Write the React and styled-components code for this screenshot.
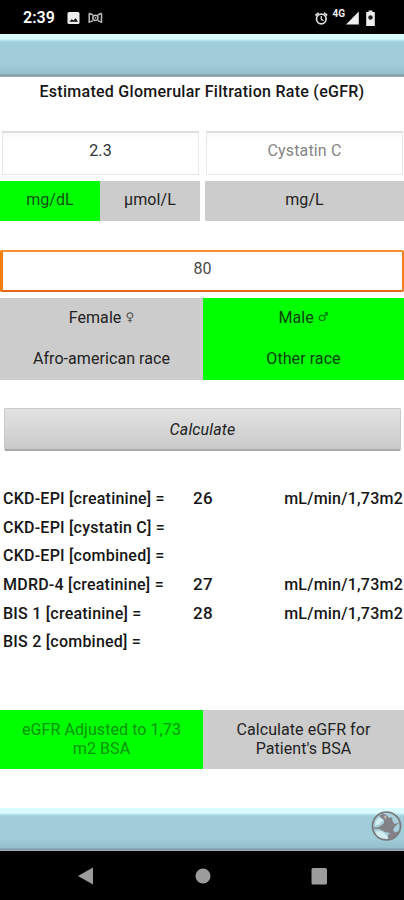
import React from 'react';
import styled, { createGlobalStyle } from 'styled-components';

const GlobalStyle = createGlobalStyle`
  * {
    box-sizing: border-box;
  }

  body {
    margin: 0;
    background: #fff;
    font-family: Roboto, sans-serif;
  }
`;

const Screen = styled.div`
  width: 404px;
  height: 900px;
  display: flex;
  flex-direction: column;
  overflow: hidden;
  background: #fff;
  color: #161616;
  font-size: 16px;
`;

const StatusBar = styled.header`
  height: 34px;
  flex-shrink: 0;
  display: flex;
  align-items: center;
  justify-content: space-between;
  padding: 1px 28px 0 23px;
  background: #000;
  color: #fff;
`;

const StatusGroup = styled.div`
  display: flex;
  align-items: center;
`;

const Clock = styled.span`
  width: 44px;
  font-size: 16px;
  font-weight: 600;
`;

const Band = styled.div`
  height: 43px;
  flex-shrink: 0;
  display: flex;
  align-items: flex-start;
  justify-content: flex-end;
  padding: 2px 2px 0 0;
  background: linear-gradient(
    #d9fcff 0,
    #d9fcff 5px,
    #a9dae5 7px,
    #a0cdd9 9px,
    #a0cdd9 70%,
    #94bfcb 92%,
    #8097a5 97%,
    #b4c0c6 100%
  );
`;

const Content = styled.main`
  flex: 1;
  display: flex;
  flex-direction: column;
`;

const Title = styled.h1`
  margin: 5px 0 0;
  height: 20px;
  line-height: 20px;
  font-size: 16px;
  font-weight: 500;
  letter-spacing: 0.27px;
  text-align: center;
  white-space: nowrap;
`;

const FieldRow = styled.div`
  display: grid;
  grid-template-columns: 197px 197px;
  gap: 7px;
  margin-top: 29px;
  padding-left: 2px;
`;

const Field = styled.div`
  height: 44px;
  padding-top: 9px;
  border: 1px solid #e8e8e8;
  border-top: 2px solid #dedede;
  background: linear-gradient(#fafafa, #fff 8px);
  line-height: 18px;
  text-align: center;
  letter-spacing: 0.15px;
  color: ${({ $placeholder }) => ($placeholder ? '#858585' : '#333')};
`;

const ActiveField = styled.div`
  height: 42px;
  margin-top: 29px;
  padding-top: 8px;
  border: 2px solid;
  border-color: #f6922c #ef7d22 #e5681c #f57f08;
  border-left-width: 3px;
  border-radius: 2px;
  background: #fff;
  line-height: 18px;
  text-align: center;
  color: #4a4a4a;
`;

const UnitRow = styled.div`
  display: grid;
  grid-template-columns: 100px 100px 199px;
  margin-top: 6px;

  & > :last-child {
    margin-left: 5px;
    margin-right: -5px;
  }
`;

const OptionGrid = styled.div`
  display: grid;
  grid-template-columns: 203px 201px;
  margin-top: ${({ $top }) => $top}px;
`;

const Option = styled.div`
  height: ${({ $height }) => $height}px;
  display: flex;
  align-items: center;
  justify-content: center;
  padding-bottom: ${({ $lift }) => $lift || 2}px;
  background: ${({ $active }) => ($active ? '#00ff00' : '#cccccc')};
  color: ${({ $color }) => $color || '#222'};
  line-height: 19px;
  letter-spacing: 0.07px;
  text-align: center;
  white-space: pre-line;
`;

const Sign = styled.span`
  margin-left: 4px;
  font-family: 'DejaVu Sans', sans-serif;
  font-size: 12px;
  opacity: 0.75;
`;

const CalculateButton = styled.button`
  height: 43px;
  margin: 28px 3px 0 4px;
  padding: 0;
  border: 1px solid #c9c9c9;
  border-bottom: 2px solid #a8a8a8;
  border-radius: 2px;
  background: linear-gradient(#e2e2e2, #d8d8d8 45%, #cacaca);
  font: italic 16px Roboto, sans-serif;
  letter-spacing: 0.15px;
  color: #222;
`;

const Results = styled.div`
  display: grid;
  grid-auto-rows: 28.7px;
  margin-top: 33px;
`;

const ResultRow = styled.div`
  display: grid;
  grid-template-columns: 190px 1fr auto;
  align-items: center;
  padding: 0 1px 0 3px;
  font-weight: 500;
  letter-spacing: 0.23px;
  white-space: nowrap;
`;

const Value = styled.span`
  font-size: 17px;
  letter-spacing: 0.4px;
`;

const NavBar = styled.nav`
  height: 49px;
  flex-shrink: 0;
  display: flex;
  align-items: center;
  justify-content: space-between;
  padding: 1px 76px 0 77px;
  background: #000;
`;

const results = [
  { label: 'CKD-EPI [creatinine] =', value: '26' },
  { label: 'CKD-EPI [cystatin C] =' },
  { label: 'CKD-EPI [combined] =' },
  { label: 'MDRD-4 [creatinine] =', value: '27' },
  { label: 'BIS 1 [creatinine] =', value: '28' },
  { label: 'BIS 2 [combined] =' },
];

const NotificationIcons = () => (
  <svg width="36" height="14" viewBox="0 0 36 14">
    <rect x="0.5" y="1" width="12" height="12" rx="1.5" fill="#eee" />
    <path d="M2.3 10.7 4.7 8.2 6.4 9.6 8.5 7.2 11 10.7Z" fill="#111" />
    <g fill="none" stroke="#bbb" strokeWidth="1.5">
      <path d="M22.2 2.2v9L26 9.6M34.5 2.2v9L30.7 9.6M22.2 2.2 26 4M34.5 2.2 30.7 4" />
      <circle cx="28.4" cy="6.8" r="2.6" />
    </g>
    <circle cx="28.4" cy="6.8" r="0.9" fill="#bbb" />
  </svg>
);

const SystemIcons = () => (
  <svg width="62" height="22" viewBox="0 0 62 22" fill="none">
    <g stroke="#ddd" strokeWidth="1.7">
      <circle cx="7.3" cy="12" r="4.8" />
      <path d="M1.4 8.5 4.6 5.8M13.2 8.5 10 5.8" />
      <path d="M7.3 9v3.4l2.3 1.4" strokeWidth="1.3" />
    </g>
    <text x="18.5" y="10" fill="#eee" fontSize="10" fontWeight="700" fontFamily="Roboto">4G</text>
    <path d="M44.8 4.5v13H32Z" fill="#eee" />
    <path d="M52.2 5h2.4V3.6h3.8V5h2.4v14h-8.6Z" fill="#eee" />
    <circle cx="56.5" cy="10.5" r="2.2" fill="#222" />
  </svg>
);

const GlobeIcon = () => (
  <svg width="31" height="32" viewBox="0 0 31 32">
    <circle cx="15.5" cy="16" r="14" fill="#a9d0da" stroke="#77777b" strokeWidth="1.7" />
    <path d="M4 21.5 10 21 14 24 18 27.5 16 29 10 28 6 25.5Z" fill="#d3edf1" />
    <path d="M5 11 8 7.5 12.5 10 8 14.5 4 15.5Z" fill="#d3edf1" />
    <path
      d="M8 6 12 3.5 15 5 18.5 8 21 7 21.5 11 23.5 14 28.5 12.5 24 16.5 22 20 24 22.5 28 21 25.5 26 20 29.5 17.5 29 16.5 25.5 19 23 14 22 9 19.5 5 18 9.5 16 13 13 13 10Z"
      fill="#828287"
    />
    <path d="M12.5 5.5 15.5 6.5 14.5 10Z" fill="#c9b9b6" />
    <path d="M2.5 18 6.5 18.5" fill="none" stroke="#828287" strokeWidth="1.5" />
  </svg>
);

const App = () => (
  <>
    <GlobalStyle />
    <Screen>
      <StatusBar>
        <StatusGroup>
          <Clock>2:39</Clock>
          <NotificationIcons />
        </StatusGroup>
        <SystemIcons />
      </StatusBar>
      <Band />

      <Content>
        <Title>Estimated Glomerular Filtration Rate (eGFR)</Title>

        <FieldRow>
          <Field>2.3</Field>
          <Field $placeholder>Cystatin C</Field>
        </FieldRow>
        <UnitRow>
          <Option $height={40} $lift={3} $active $color="#145014">mg/dL</Option>
          <Option $height={40} $lift={3}>µmol/L</Option>
          <Option $height={40} $lift={3}>mg/L</Option>
        </UnitRow>

        <ActiveField>80</ActiveField>
        <OptionGrid $top={6}>
          <Option $height={41}>Female<Sign>♀</Sign></Option>
          <Option $height={41} $active $color="#0b420b">Male<Sign>♂</Sign></Option>
          <Option $height={41}>Afro-american race</Option>
          <Option $height={41} $active $color="#0b420b">Other race</Option>
        </OptionGrid>

        <CalculateButton>Calculate</CalculateButton>

        <Results>
          {results.map(({ label, value }) => (
            <ResultRow key={label}>
              <span>{label}</span>
              <Value>{value}</Value>
              {value && <span>mL/min/1,73m2</span>}
            </ResultRow>
          ))}
        </Results>

        <OptionGrid $top={54}>
          <Option $height={59} $active $color="#0a930a">{'eGFR Adjusted to 1,73\nm2 BSA'}</Option>
          <Option $height={59}>{'Calculate eGFR for\nPatient\'s BSA'}</Option>
        </OptionGrid>
      </Content>

      <Band>
        <GlobeIcon />
      </Band>
      <NavBar>
        <svg width="17" height="18" viewBox="0 0 17 18"><path d="M16 .5v17L1 9Z" fill="#9c9c9c" /></svg>
        <svg width="16" height="16" viewBox="0 0 16 16"><circle cx="8" cy="8" r="7.5" fill="#9c9c9c" /></svg>
        <svg width="17" height="18" viewBox="0 0 17 18"><rect x="0.5" y="1" width="15.5" height="16.5" rx="1.5" fill="#9c9c9c" /></svg>
      </NavBar>
    </Screen>
  </>
);

export default App;
